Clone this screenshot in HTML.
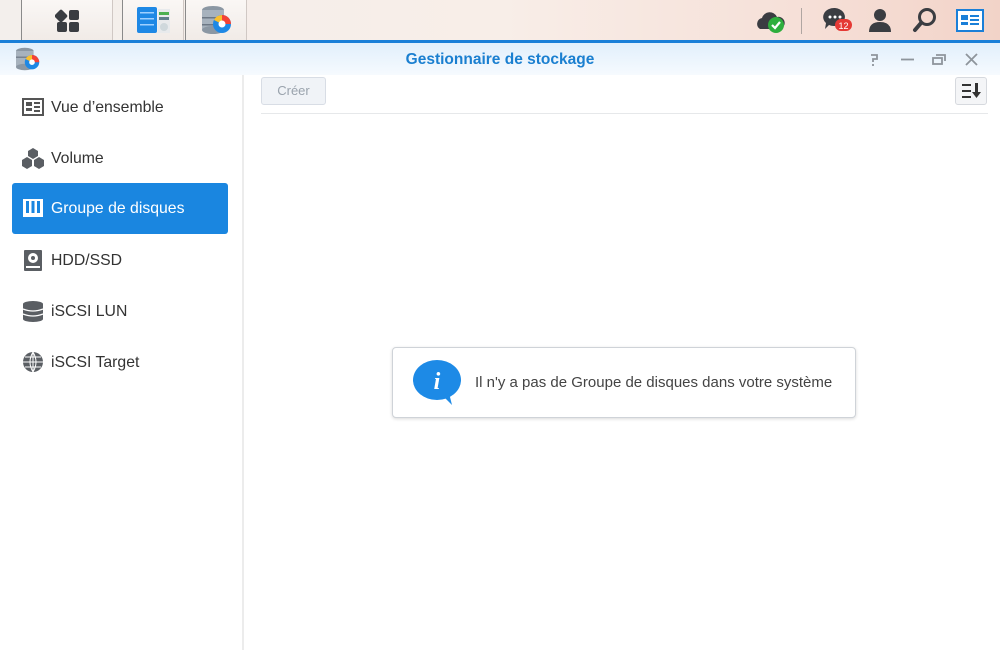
<!DOCTYPE html>
<html><head><meta charset="utf-8"><style>
*{margin:0;padding:0;box-sizing:border-box}
body{width:1000px;height:650px;overflow:hidden;font-family:"Liberation Sans",sans-serif;background:#fff;position:relative}
.tb{position:absolute;left:0;top:0;width:1000px;height:40px;background:linear-gradient(90deg,#f3efec 0%,#f8eee8 50%,#f6e0d8 80%,#f2d3c8 100%)}
.tab{position:absolute;top:0;height:40px;border-left:1px solid #8a8a8a;border-right:1px solid #d0c8c4;background:linear-gradient(#faf7f5,#f1ebe7)}
.blue{position:absolute;top:40px;left:0;width:1000px;height:3px;background:#1a7fd8}
.title{position:absolute;top:43px;left:0;width:1000px;height:32px;background:linear-gradient(#e1effc,#f6fafe)}
.title .t{position:absolute;left:0;width:1000px;top:8px;text-align:center;color:#1a7fd0;font-weight:bold;font-size:15.5px}
.side{position:absolute;top:75px;left:0;width:244px;height:575px;background:#fff;border-right:2px solid #ececec}
.item{position:absolute;left:12px;width:216px;height:51px;font-size:15.8px;color:#333;padding-left:39px;line-height:51px}
.item.sel{background:#1a86e0;color:#fff;border-radius:3px}
.ic{position:absolute;left:10px;top:14px;width:22px;height:22px}
.btn{position:absolute;left:261px;top:77px;width:65px;height:28px;border:1px solid #d8dde5;border-radius:3px;background:#f0f3f7;color:#9aa3ad;font-size:13px;text-align:center;line-height:26px}
.sort{position:absolute;left:955px;top:77px;width:32px;height:28px;border:1px solid #d6d9de;border-radius:3px;background:#f4f5f7}
.hr{position:absolute;left:261px;top:113px;width:727px;height:1px;background:#e6e8ea}
.msg{position:absolute;left:392px;top:347px;width:464px;height:71px;border:1px solid #cfd3d8;border-radius:4px;background:#fff;box-shadow:0 1px 3px rgba(0,0,0,.15)}
.msg .tx{position:absolute;left:82px;top:26px;font-size:15px;color:#444}
</style></head><body>
<div class="tb"></div>
<div class="tab" style="left:21px;width:92px"><svg width="26" height="26" viewBox="0 0 26 26" style="position:absolute;left:33px;top:8px"><rect x="1" y="3" width="10" height="10" rx="2" fill="#3a3d42" transform="rotate(45 6 8)"/><rect x="14" y="2" width="10" height="10" rx="2" fill="#3a3d42"/><rect x="2" y="14" width="10" height="10" rx="2" fill="#3a3d42"/><rect x="14" y="14" width="10" height="10" rx="2" fill="#3a3d42"/></svg></div>
<div class="tab" style="left:122px;width:62px"><svg width="34" height="28" viewBox="0 0 34 28" style="position:absolute;left:14px;top:6px"><rect x="0" y="1" width="20" height="26" rx="2" fill="#1e88e5"/><rect x="3" y="6" width="14" height="1.5" fill="#9fd0ff"/><rect x="3" y="12" width="14" height="1.5" fill="#9fd0ff"/><rect x="3" y="18" width="14" height="1.5" fill="#9fd0ff"/><rect x="21" y="3" width="12" height="24" fill="#e8eaec"/><rect x="22" y="6" width="10" height="3" fill="#4caf50"/><rect x="22" y="11" width="10" height="3" fill="#607d8b"/><circle cx="27" cy="21" r="4" fill="#cfd8dc"/></svg></div>
<div class="tab" style="left:185px;width:62px"><svg width="32" height="30" viewBox="0 0 32 30" style="position:absolute;left:15px;top:5px"><ellipse cx="12" cy="5" rx="11" ry="4" fill="#8b97a3"/><rect x="1" y="5" width="22" height="20" fill="#a7b2bd"/><rect x="1" y="12" width="22" height="1.5" fill="#6d7885"/><rect x="1" y="19" width="22" height="1.5" fill="#6d7885"/><ellipse cx="12" cy="25" rx="11" ry="4" fill="#8b97a3"/><circle cx="21" cy="19" r="9" fill="#1e88e5"/><path d="M21 19 L21 10 A9 9 0 0 1 30 19 Z" fill="#f44336"/><path d="M21 19 L13 15 A9 9 0 0 1 21 10 Z" fill="#fbc02d"/><circle cx="21" cy="19" r="3.5" fill="#fff"/></svg></div>
<svg width="30" height="28" viewBox="0 0 30 28" style="position:absolute;left:756px;top:7px"><path d="M4 22 a6 6 0 0 1 2-11 a8 8 0 0 1 15-1 a6 6 0 0 1 3 12 z" fill="#3a3d42"/><circle cx="20" cy="18" r="8" fill="#2eae3e"/><path d="M16 18 l3 3 l5-6" stroke="#fff" stroke-width="2.2" fill="none"/></svg>
<div style="position:absolute;left:801px;top:8px;width:1px;height:26px;background:#b0a6a2"></div>
<svg width="32" height="28" viewBox="0 0 32 28" style="position:absolute;left:822px;top:6px"><path d="M13 2 a11 9 0 1 1 -6 17 l-4 4 l1-6 a11 9 0 0 1 9-15z" fill="#3a3d42"/><circle cx="8" cy="11" r="1.5" fill="#fff"/><circle cx="13" cy="11" r="1.5" fill="#fff"/><circle cx="18" cy="11" r="1.5" fill="#fff"/><rect x="13" y="13" width="17" height="12" rx="6" fill="#e53935"/><text x="21.5" y="23" font-size="9" fill="#fff" text-anchor="middle" font-family="Liberation Sans">12</text></svg>
<svg width="24" height="26" viewBox="0 0 24 26" style="position:absolute;left:868px;top:7px"><circle cx="12" cy="8" r="6" fill="#3a3d42"/><path d="M1 25 q0-10 11-10 q11 0 11 10z" fill="#3a3d42"/></svg>
<svg width="26" height="26" viewBox="0 0 26 26" style="position:absolute;left:912px;top:7px"><circle cx="15" cy="10" r="7.5" stroke="#3a3d42" stroke-width="3" fill="none"/><path d="M9 16 L3 23" stroke="#3a3d42" stroke-width="4" stroke-linecap="round"/></svg>
<svg width="28" height="24" viewBox="0 0 28 24" style="position:absolute;left:956px;top:9px"><rect x="1" y="1" width="26" height="21" fill="#fff" stroke="#1a7fd8" stroke-width="2"/><rect x="5" y="6" width="7" height="5" fill="#1a7fd8"/><rect x="5" y="13" width="7" height="3" fill="#1a7fd8"/><rect x="14" y="6" width="9" height="2" fill="#1a7fd8"/><rect x="14" y="10" width="9" height="2" fill="#1a7fd8"/><rect x="14" y="14" width="9" height="2" fill="#1a7fd8"/></svg>
<div class="blue"></div>
<div class="title"><div class="t">Gestionnaire de stockage</div>
<svg width="26" height="24" viewBox="0 0 32 30" style="position:absolute;left:15px;top:4px"><ellipse cx="12" cy="5" rx="11" ry="4" fill="#8b97a3"/><rect x="1" y="5" width="22" height="20" fill="#a7b2bd"/><rect x="1" y="12" width="22" height="1.5" fill="#6d7885"/><ellipse cx="12" cy="25" rx="11" ry="4" fill="#8b97a3"/><circle cx="21" cy="19" r="9" fill="#1e88e5"/><path d="M21 19 L21 10 A9 9 0 0 1 30 19 Z" fill="#f44336"/><path d="M21 19 L13 15 A9 9 0 0 1 21 10 Z" fill="#fbc02d"/><circle cx="21" cy="19" r="3.5" fill="#fff"/></svg>
<svg width="120" height="20" viewBox="0 0 120 20" style="position:absolute;left:866px;top:7px" fill="none" stroke="#8e959c" stroke-width="1.8"><path d="M5 5 h6 v4 h-4 v3 M7 14 v2"/><path d="M35 9.5 h13"/><rect x="67" y="8" width="9" height="6"/><path d="M70 5 h9 v6"/><path d="M100 4 l11 11 M111 4 l-11 11"/></svg>
</div>
<div class="side">
<div class="item" style="top:7px"><svg class="ic" viewBox="0 0 22 22"><rect x="1" y="3" width="20" height="16" fill="none" stroke="#555" stroke-width="2"/><rect x="4" y="6" width="6" height="4" fill="#555"/><rect x="4" y="12" width="6" height="3" fill="#555"/><rect x="12" y="6" width="6" height="2" fill="#555"/><rect x="12" y="10" width="6" height="2" fill="#555"/><rect x="12" y="14" width="6" height="2" fill="#555"/></svg>Vue d’ensemble</div>
<div class="item" style="top:58px"><svg class="ic" viewBox="0 0 22 22"><path d="M11 1 l5 3 v5 l-5 3 l-5-3 v-5z M5 10 l5 3 v6 l-5 3 l-5-3 v-6z M17 10 l5 3 v6 l-5 3 l-5-3 v-6z" fill="#5a5e63"/></svg>Volume</div>
<div class="item sel" style="top:108px"><svg class="ic" viewBox="0 0 22 22"><rect x="1" y="2" width="20" height="18" fill="#fff"/><rect x="4" y="4" width="3" height="12" fill="#1a86e0"/><rect x="9.5" y="4" width="3" height="12" fill="#1a86e0"/><rect x="15" y="4" width="3" height="12" fill="#1a86e0"/></svg>Groupe de disques</div>
<div class="item" style="top:160px"><svg class="ic" viewBox="0 0 22 22"><rect x="2" y="1" width="18" height="21" rx="1" fill="#5a5e63"/><circle cx="11" cy="9" r="5" fill="#fff"/><circle cx="11" cy="9" r="2" fill="#5a5e63"/><rect x="4" y="17" width="14" height="2" fill="#fff"/></svg>HDD/SSD</div>
<div class="item" style="top:211px"><svg class="ic" viewBox="0 0 22 22"><ellipse cx="11" cy="4" rx="10" ry="3" fill="#5a5e63"/><rect x="1" y="4" width="20" height="15" fill="#5a5e63"/><ellipse cx="11" cy="19" rx="10" ry="3" fill="#5a5e63"/><path d="M1 9 q10 4 20 0 M1 14 q10 4 20 0" stroke="#fff" stroke-width="1.3" fill="none"/></svg>iSCSI LUN</div>
<div class="item" style="top:262px"><svg class="ic" viewBox="0 0 22 22"><circle cx="11" cy="11" r="10" fill="#5a5e63"/><path d="M1 11 h20 M11 1 v20 M3 6 h16 M3 16 h16 M11 1 q-6 10 0 20 M11 1 q6 10 0 20" stroke="#fff" stroke-width="1" fill="none"/></svg>iSCSI Target</div>
</div>
<div class="btn">Créer</div>
<div class="sort"><svg width="20" height="16" viewBox="0 0 20 16" style="position:absolute;left:6px;top:5px"><rect x="0" y="1" width="9" height="2" fill="#333"/><rect x="0" y="7" width="9" height="2" fill="#333"/><rect x="0" y="13" width="9" height="2" fill="#333"/><rect x="13" y="0" width="3" height="10" fill="#333"/><path d="M10 9 h9 l-4.5 6z" fill="#333"/></svg></div>
<div class="hr"></div>
<div class="msg"><svg width="52" height="46" viewBox="0 0 52 46" style="position:absolute;left:20px;top:12px"><ellipse cx="24" cy="20" rx="24" ry="20" fill="#1d8ae6"/><path d="M30 36 L39 45 L36 33z" fill="#1d8ae6"/><text x="24" y="29" font-size="24" font-style="italic" font-weight="bold" fill="#fff" text-anchor="middle" font-family="Liberation Serif">i</text></svg><div class="tx">Il n'y a pas de Groupe de disques dans votre système</div></div>
</body></html>
